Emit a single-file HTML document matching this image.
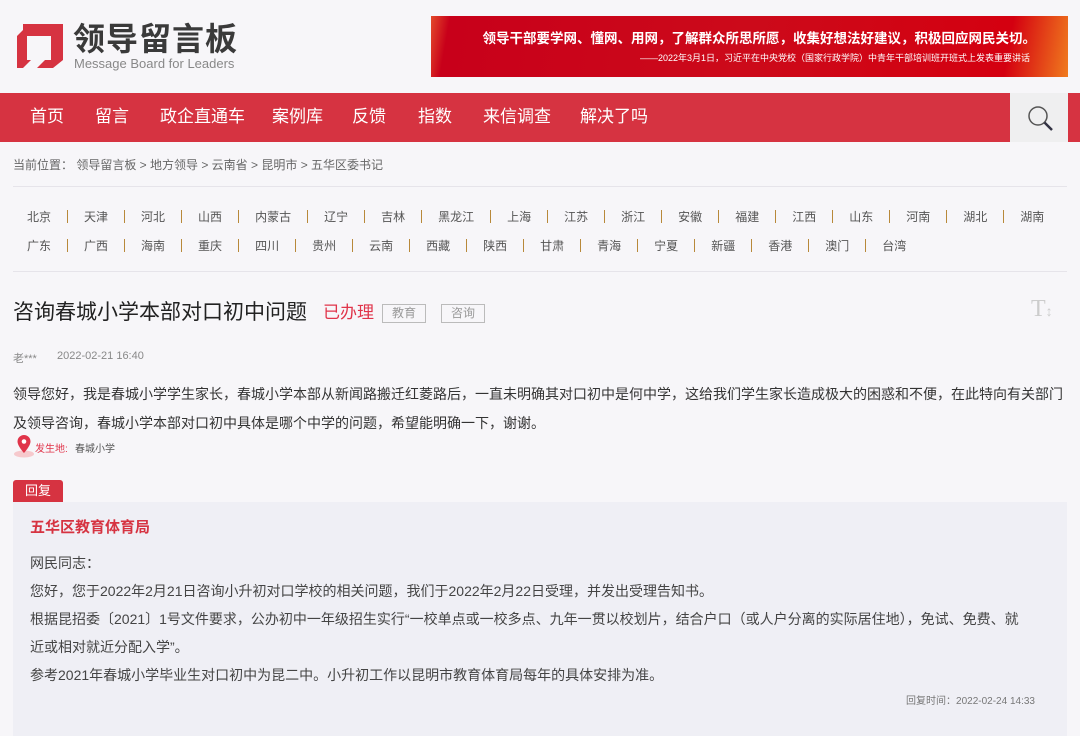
<!DOCTYPE html>
<html><head><meta charset="utf-8"><style>
*{margin:0;padding:0;box-sizing:border-box}
body{width:1080px;height:736px;overflow:hidden;background:#f7f6f9;font-family:"Liberation Sans","Noto Sans CJK SC",sans-serif;color:#333;position:relative}
.abs{position:absolute}
.nav{left:0;top:93px;width:1080px;height:49px;background:#d63341}
.nav span{position:absolute;top:14px;color:#fff;font-size:17px;line-height:20px}
.prov{left:27px;font-size:12px;color:#555;display:flex;align-items:center;white-space:nowrap}
.prov i{display:inline-block;width:1px;height:13px;background:#b8893a;margin:0 16px}
.hr{left:13px;width:1054px;height:1px;background:#e6e4ea}
.tag{top:304px;height:19px;border:1px solid #bbb;color:#999;font-size:12px;line-height:17px;text-align:center;width:44px}
.reply p{font-size:14px;color:#444;line-height:28px}
</style></head><body>
<svg class="abs" style="left:15px;top:22px" width="50" height="48" viewBox="0 0 50 48">
<path d="M8 2H48V38L38 46H22L30 38H36V14H12V38H16L8 46H2V14L8 8Z" fill="#d63341"/>
</svg>
<div class="abs" style="left:73px;top:19px;font-size:32px;font-weight:bold;color:#3a3a3a;letter-spacing:1px;line-height:40px">领导留言板</div>
<div class="abs" style="left:74px;top:56px;font-size:13px;color:#888;line-height:16px">Message Board for Leaders</div>
<div class="abs" style="left:431px;top:16px;width:637px;height:61px;background:linear-gradient(100deg,#e34a2a 0%,#c8001a 3%,#cc0a1a 50%,#d40010 90%,#f07b1e 100%)"></div>
<div class="abs" style="right:44px;top:30px;white-space:nowrap;color:#fff;font-size:13.5px;font-weight:bold;line-height:18px">领导干部要学网、懂网、用网，了解群众所思所愿，收集好想法好建议，积极回应网民关切。</div>
<div class="abs" style="right:50px;top:52px;white-space:nowrap;color:#fff;font-size:9px;line-height:12px">——2022年3月1日，习近平在中央党校（国家行政学院）中青年干部培训班开班式上发表重要讲话</div>
<div class="abs nav">
<span style="left:30px">首页</span><span style="left:95px">留言</span><span style="left:160px">政企直通车</span><span style="left:272px">案例库</span><span style="left:352px">反馈</span><span style="left:418px">指数</span><span style="left:483px">来信调查</span><span style="left:580px">解决了吗</span>
<div style="position:absolute;left:1010px;top:0;width:58px;height:49px;background:#efeff0">
<svg width="58" height="49" viewBox="0 0 58 49"><circle cx="28" cy="23" r="9" fill="none" stroke="#555" stroke-width="1.5"/><line x1="34.5" y1="29.5" x2="42" y2="37" stroke="#334" stroke-width="2.5"/></svg></div>
</div>
<div class="abs" style="left:13px;top:156px;font-size:12px;color:#666">当前位置： 领导留言板 &gt; 地方领导 &gt; 云南省 &gt; 昆明市 &gt; 五华区委书记</div>
<div class="abs hr" style="top:186px"></div>
<div class="abs prov" style="top:208px">北京<i></i>天津<i></i>河北<i></i>山西<i></i>内蒙古<i></i>辽宁<i></i>吉林<i></i>黑龙江<i></i>上海<i></i>江苏<i></i>浙江<i></i>安徽<i></i>福建<i></i>江西<i></i>山东<i></i>河南<i></i>湖北<i></i>湖南</div>
<div class="abs prov" style="top:237px">广东<i></i>广西<i></i>海南<i></i>重庆<i></i>四川<i></i>贵州<i></i>云南<i></i>西藏<i></i>陕西<i></i>甘肃<i></i>青海<i></i>宁夏<i></i>新疆<i></i>香港<i></i>澳门<i></i>台湾</div>
<div class="abs hr" style="top:271px"></div>
<div class="abs" style="left:13px;top:300px;font-size:21px;color:#222;line-height:26px">咨询春城小学本部对口初中问题</div>
<div class="abs" style="left:323px;top:303px;font-size:17px;color:#e0344a;line-height:20px">已办理</div>
<div class="abs tag" style="left:382px">教育</div>
<div class="abs tag" style="left:441px">咨询</div>
<div class="abs" style="left:1031px;top:296px;font-family:'Liberation Serif',serif;font-size:24px;color:#ccc;line-height:26px">T<span style="font-size:14px;font-family:'Liberation Sans'">↕</span></div>
<div class="abs" style="left:13px;top:350px;font-size:11px;color:#888">老***</div>
<div class="abs" style="left:57px;top:350px;font-size:11px;color:#888">2022-02-21 16:40</div>
<div class="abs" style="left:13px;top:380px;width:1060px;font-size:14px;color:#333;line-height:29px">领导您好，我是春城小学学生家长，春城小学本部从新闻路搬迁红菱路后，一直未明确其对口初中是何中学，这给我们学生家长造成极大的困惑和不便，在此特向有关部门及领导咨询，春城小学本部对口初中具体是哪个中学的问题，希望能明确一下，谢谢。</div>
<svg class="abs" style="left:12px;top:433px" width="24" height="26" viewBox="0 0 24 26"><ellipse cx="12" cy="21" rx="10" ry="3.5" fill="#f6c9cd"/><path d="M12 2a6.5 6.5 0 0 0-6.5 6.5C5.5 13 12 20 12 20s6.5-7 6.5-11.5A6.5 6.5 0 0 0 12 2z" fill="#e0344a"/><circle cx="12" cy="8.5" r="2.3" fill="#fff"/></svg>
<div class="abs" style="left:35px;top:440px;font-size:10px;color:#e0344a">发生地:</div>
<div class="abs" style="left:75px;top:440px;font-size:10px;color:#555">春城小学</div>
<div class="abs" style="left:13px;top:480px;width:50px;height:22px;background:#d63341;color:#fff;font-size:13px;line-height:22px;text-align:center;border-radius:3px 3px 0 0">回复</div>
<div class="abs reply" style="left:13px;top:502px;width:1054px;height:234px;background:#efeff5">
<div style="position:absolute;left:17px;top:14px;font-size:15px;font-weight:bold;color:#d63341">五华区教育体育局</div>
<div style="position:absolute;left:17px;top:47px;width:1034px">
<p>网民同志：</p>
<p>您好，您于2022年2月21日咨询小升初对口学校的相关问题，我们于2022年2月22日受理，并发出受理告知书。</p>
<p>根据昆招委〔2021〕1号文件要求，公办初中一年级招生实行“一校单点或一校多点、九年一贯以校划片，结合户口（或人户分离的实际居住地），免试、免费、就<br>近或相对就近分配入学”。</p>
<p>参考2021年春城小学毕业生对口初中为昆二中。小升初工作以昆明市教育体育局每年的具体安排为准。</p>
</div>
<div style="position:absolute;right:32px;top:190px;font-size:10px;color:#777">回复时间：2022-02-24 14:33</div>
</div>
</body></html>
